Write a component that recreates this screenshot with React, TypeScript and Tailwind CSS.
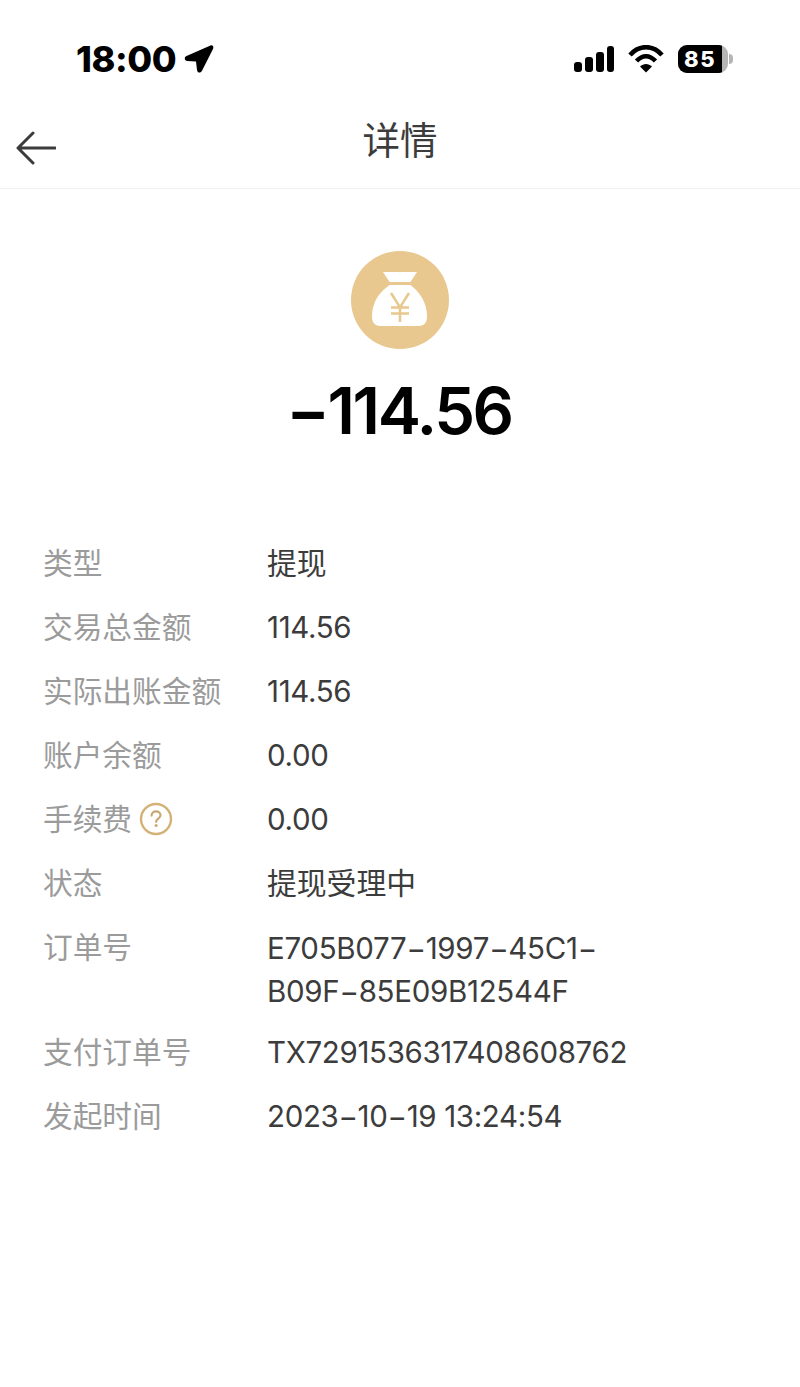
const CJK = "font-['Inter','Noto_Sans_CJK_SC',sans-serif]";

function Row({ label, value, extra, tall, zh }: { label: string; value: React.ReactNode; extra?: React.ReactNode; tall?: boolean; zh?: boolean }) {
  return (
    <div className={tall ? "flex h-[105px]" : "flex h-[64px]"}>
      <div className="flex h-[42px] w-[224px] shrink-0 items-center gap-[7px] text-[29.7px] text-[#9b9b9b]">
        {label}
        {extra}
      </div>
      <div className={zh ? "w-[370px] text-[29.8px] leading-[42px] text-[#3c3c3c]" : tall ? "w-[370px] pt-[1px] text-[29.5px] leading-[43px] tracking-[-0.3px] text-[#3c3c3c]" : "w-[370px] text-[29.5px] leading-[42px] tracking-[-0.35px] text-[#3c3c3c]"}>{value}</div>
    </div>
  );
}

function Help() {
  return (
    <svg width="34" height="34" viewBox="0 0 34 34" fill="none">
      <circle cx="17" cy="17" r="15" stroke="#d4b277" strokeWidth="2.4" />
      <path d="M12.6 13.6c0-2.6 2-4.2 4.5-4.2s4.4 1.6 4.4 3.800c0 3.400-4.400 3.400-4.400 6.600" stroke="#c9a86e" strokeWidth="2.200" strokeLinecap="round" />
      <circle cx="17.100" cy="23.600" r="1.500" fill="#c9a86e" />
    </svg>
  );
}

function MoneyBag() {
  return (
    <svg width="98" height="98" viewBox="0 0 98 98">
      <circle cx="49" cy="49" r="49" fill="#e8c88e" />
      <path d="M32 21h34l-6.500 10h-21z" fill="#fff" />
      <path d="M38.500 34h21c4 3 8 7 11 12 3.500 6 5.500 12 5.500 20 0 5.500-3 9-8 9H29c-5 0-8-3.500-8-9 0-8 2-14 5.500-20 3-5 8-9 12-12z" fill="#fff" />
      <path d="M40 42 49 56.500 58 42M40 56.500h18M40 62.500h18M49 56.500V71" fill="none" stroke="#e8c88e" strokeWidth="2.500" />
    </svg>
  );
}

export default function App() {
  return (
    <div className={`flex min-h-[1387px] w-[800px] flex-col bg-white ${CJK}`}>
      <div className="flex h-[100px] items-start justify-between pl-[76px] pr-[67px] pt-[38px]">
        <div className="flex items-center gap-[8px]">
          <span className="text-[36px] font-extrabold leading-[42px] tracking-[-0.4px] text-black">18:00</span>
          <svg width="30" height="30" viewBox="0 0 30 30"><path d="M26.500 1.500 2.500 12c-2.800 1.300-2 4.800 1 5l8.500.500 1 8.500c.300 3 3.700 3.600 5 .800L29 5c1-2.500-.500-4.300-2.500-3.500z" fill="#000" /></svg>
        </div>
        <div className="flex items-center gap-[14px] pt-[7px]">
          <svg width="40" height="26" viewBox="0 0 40 26" fill="#000">
            <rect x="0" y="16" width="8" height="10" rx="3" />
            <rect x="11" y="11" width="8" height="15" rx="3" />
            <rect x="22" y="6" width="8" height="20" rx="3" />
            <rect x="33" y="0" width="7" height="26" rx="3" />
          </svg>
          <svg width="36" height="28" viewBox="0 0 36 28" fill="none">
            <path d="M2 10C11-.5 25-.5 34 10" stroke="#000" strokeWidth="4.500" />
            <path d="M8.500 16c6-6.500 13-6.500 19 0" stroke="#000" strokeWidth="4.500" />
            <path d="M12 21.500c3.500-3.500 8.500-3.500 12 0L18 27.500z" fill="#000" />
          </svg>
          <div className="flex items-center">
            <div className="flex h-[28px] w-[50px] overflow-hidden rounded-[9px] bg-[#b5b5b5]">
              <div className="flex w-[44px] items-center justify-center bg-black text-[22px] font-extrabold tracking-[1.500px] text-white">85</div>
            </div>
            <div className="ml-[1px] h-[10px] w-[4px] rounded-r-full bg-[#b5b5b5]" />
          </div>
        </div>
      </div>
      <div className="relative flex h-[89px] items-start justify-center border-b border-[#f1f1f1]">
        <svg className="absolute left-[16px] top-[31px]" width="40" height="34" viewBox="0 0 40 34" fill="none">
          <path d="M39 17H3M17 2 2 17l15 15" stroke="#3c3c3c" strokeWidth="3" strokeLinecap="round" strokeLinejoin="round" />
        </svg>
        <h1 className="mt-[18px] text-[37.500px] font-normal leading-[46px] text-[#3c3c3c]">详情</h1>
      </div>
      <div className="flex flex-col items-center pt-[62px]">
        <MoneyBag />
        <div className="mt-[20px] -translate-x-[1px] text-[65px] font-semibold leading-[84px] tracking-[-2.400px] text-black">−114.56</div>
      </div>
      <div className="flex flex-col pl-[43px] pt-[89px]">
        <Row label="类型" value="提现" zh />
        <Row label="交易总金额" value="114.56" />
        <Row label="实际出账金额" value="114.56" />
        <Row label="账户余额" value="0.00" />
        <Row label="手续费" value="0.00" extra={<Help />} />
        <Row label="状态" value="提现受理中" zh />
        <Row label="订单号" value={<>E705B077−1997−45C1−<br />B09F−85E09B12544F</>} tall />
        <Row label="支付订单号" value="TX7291536317408608762" />
        <Row label="发起时间" value="2023−10−19 13:24:54" />
      </div>
    </div>
  );
}
